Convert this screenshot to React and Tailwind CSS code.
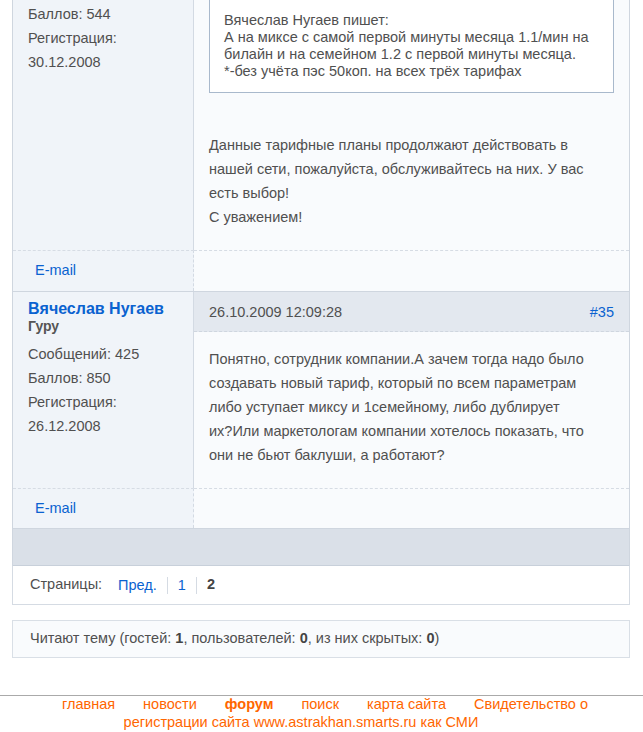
import React from 'react';

const font = { fontFamily: '"Liberation Sans", Arial, sans-serif' };

function EmailRow({ tall }) {
  const h = tall ? 'h-[41px]' : 'h-10';
  return (
    <div className="grid grid-cols-[181px_1fr] border-b border-[#cfd6df]">
      <div className={`bg-[#f0f4f9] border-r border-[#d3dae3] border-t border-dashed border-t-[#d6dce4] ${h} flex items-center pl-[22px]`}>
        <a href="#" className="text-[#0a62d0]">E-mail</a>
      </div>
      <div className={`bg-[#f9fbfd] border-t border-dashed border-[#d6dce4] ${h}`} />
    </div>
  );
}

export default function App() {
  return (
    <div className="min-h-[732px] bg-white text-[14.5px] text-[#505050]" style={font}>
      <div className="ml-[12px] w-[618px]">
        {/* TOPIC TABLE */}
        <div className="border-x border-[#cfd6df]">
          {/* post #34 (tail) */}
          <div className="grid grid-cols-[181px_1fr]">
            <div className="bg-[#f0f4f9] border-r border-[#d3dae3] h-[250px] pt-[2px] pl-[15px] leading-6">
              <div>Баллов: 544</div>
              <div>Регистрация:</div>
              <div>30.12.2008</div>
            </div>
            <div className="bg-[#f9fbfd] h-[250px] px-[15px]">
              <div className="bg-white border border-t-0 border-[#a9b9cc] pl-[14px] pr-2 pt-[12px] pb-[12px] leading-[17px] whitespace-nowrap">
                Вячеслав Нугаев пишет:<br />
                А на миксе с самой первой минуты месяца 1.1/мин на<br />
                билайн и на семейном 1.2 с первой минуты месяца.<br />
                *-без учёта пэс 50коп. на всех трёх тарифах
              </div>
              <div className="mt-[40px] leading-6 whitespace-nowrap">
                Данные тарифные планы продолжают действовать в<br />
                нашей сети, пожалуйста, обслуживайтесь на них. У вас<br />
                есть выбор!<br />
                С уважением!
              </div>
            </div>
          </div>
          <EmailRow tall />

          {/* post #35 */}
          <div className="grid grid-cols-[181px_1fr]">
            <div className="bg-[#f0f4f9] border-r border-[#d3dae3] pt-[8px] pl-[15px]">
              <a href="#" className="block text-[#0a62d0] font-bold text-[16px] leading-[18px]">Вячеслав Нугаев</a>
              <div className="font-bold text-[14px] leading-4 text-[#555]">Гуру</div>
              <div className="mt-[8px] leading-6">
                <div>Сообщений: 425</div>
                <div>Баллов: 850</div>
                <div>Регистрация:</div>
                <div>26.12.2008</div>
              </div>
            </div>
            <div className="bg-[#f9fbfd]">
              <div className="bg-[#e3e8ef] h-[40px] px-[15px] pt-[2px] flex items-center justify-between border-b border-dashed border-[#cfd6df]">
                <span>26.10.2009 12:09:28</span>
                <a href="#" className="text-[#0a62d0]">#35</a>
              </div>
              <div className="px-[15px] pt-[15px] pb-[21px] leading-6 whitespace-nowrap">
                Понятно, сотрудник компании.А зачем тогда надо было<br />
                создавать новый тариф, который по всем параметрам<br />
                либо уступает миксу и 1семейному, либо дублирует<br />
                их?Или маркетологам компании хотелось показать, что<br />
                они не бьют баклуши, а работают?
              </div>
            </div>
          </div>
          <EmailRow />

          <div className="h-[37px] bg-[#dae0e8] border-b border-[#c8d0da]" />
        </div>

        {/* PAGES */}
        <div className="border-x border-b border-[#d5dbe3] bg-white h-[39px] flex items-center pl-[17px]">
          <span className="mr-[16px]">Страницы:</span>
          <a href="#" className="text-[#0a62d0] pr-[10px] border-r border-[#d5dbe3] leading-[17px]">Пред.</a>
          <a href="#" className="text-[#0a62d0] px-[10px] border-r border-[#d5dbe3] leading-[17px]">1</a>
          <b className="pl-[10px] text-[#444]">2</b>
        </div>

        {/* WHO IS READING */}
        <div className="mt-[15px] border border-[#d9dfe6] bg-[#f9fbfd] h-[38px] flex items-center pl-[17px]">
          <span>
            Читают тему (гостей: <b className="text-[#444]">1</b>, пользователей: <b className="text-[#444]">0</b>, из них скрытых: <b className="text-[#444]">0</b>)
          </span>
        </div>
      </div>

      {/* FOOTER */}
      <div className="mt-[37px] border-t border-[#aaaaaa] pl-[7px] text-center leading-[17.5px] text-[#ff6600]">
        <a href="#" className="mr-[28px]">главная</a>
        <a href="#" className="mr-[28px]">новости</a>
        <a href="#" className="mr-[28px] font-bold">форум</a>
        <a href="#" className="mr-[28px]">поиск</a>
        <a href="#" className="mr-[28px]">карта сайта</a>
        <a href="#">Свидетельство о<br />регистрации сайта www.astrakhan.smarts.ru как СМИ</a>
        <span className="inline-block w-[48px]" />
      </div>
    </div>
  );
}
